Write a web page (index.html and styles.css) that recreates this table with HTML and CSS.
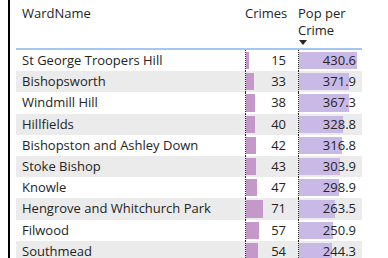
FILE: index.html
```html
<!DOCTYPE html>
<html>
<head>
<meta charset="utf-8">
<link rel="stylesheet" href="styles.css">
</head>
<body>
<div class="frame">
  <div class="table">
    <div class="head">
      <div class="hcell">WardName</div>
      <div class="hcell">Crimes</div>
      <div class="hcell">Pop per<br>Crime
        <svg class="sort" width="8" height="5" viewBox="0 0 8 5"><path d="M0 0 H8 L4 5 Z" fill="#252423"/></svg>
      </div>
    </div>
    <div class="row"><div class="name">St George Troopers Hill</div><div class="num"><div class="inner"><span class="bar crimes" style="width:3.4px"></span><span class="val">15</span></div></div><div class="num pop"><div class="inner"><span class="bar ppc" style="width:58px"></span><span class="val">430.6</span></div></div></div>
    <div class="row"><div class="name">Bishopsworth</div><div class="num"><div class="inner"><span class="bar crimes" style="width:7.5px"></span><span class="val">33</span></div></div><div class="num pop"><div class="inner"><span class="bar ppc" style="width:50.1px"></span><span class="val">371.9</span></div></div></div>
    <div class="row"><div class="name">Windmill Hill</div><div class="num"><div class="inner"><span class="bar crimes" style="width:8.7px"></span><span class="val">38</span></div></div><div class="num pop"><div class="inner"><span class="bar ppc" style="width:49.5px"></span><span class="val">367.3</span></div></div></div>
    <div class="row"><div class="name">Hillfields</div><div class="num"><div class="inner"><span class="bar crimes" style="width:9.1px"></span><span class="val">40</span></div></div><div class="num pop"><div class="inner"><span class="bar ppc" style="width:44.3px"></span><span class="val">328.8</span></div></div></div>
    <div class="row"><div class="name">Bishopston and Ashley Down</div><div class="num"><div class="inner"><span class="bar crimes" style="width:9.6px"></span><span class="val">42</span></div></div><div class="num pop"><div class="inner"><span class="bar ppc" style="width:42.7px"></span><span class="val">316.8</span></div></div></div>
    <div class="row"><div class="name">Stoke Bishop</div><div class="num"><div class="inner"><span class="bar crimes" style="width:9.8px"></span><span class="val">43</span></div></div><div class="num pop"><div class="inner"><span class="bar ppc" style="width:40.9px"></span><span class="val">303.9</span></div></div></div>
    <div class="row"><div class="name">Knowle</div><div class="num"><div class="inner"><span class="bar crimes" style="width:10.7px"></span><span class="val">47</span></div></div><div class="num pop"><div class="inner"><span class="bar ppc" style="width:40.3px"></span><span class="val">298.9</span></div></div></div>
    <div class="row"><div class="name">Hengrove and Whitchurch Park</div><div class="num"><div class="inner"><span class="bar crimes" style="width:16.5px"></span><span class="val">71</span></div></div><div class="num pop"><div class="inner"><span class="bar ppc" style="width:35.5px"></span><span class="val">263.5</span></div></div></div>
    <div class="row"><div class="name">Filwood</div><div class="num"><div class="inner"><span class="bar crimes" style="width:13px"></span><span class="val">57</span></div></div><div class="num pop"><div class="inner"><span class="bar ppc" style="width:33.8px"></span><span class="val">250.9</span></div></div></div>
    <div class="row"><div class="name">Southmead</div><div class="num"><div class="inner"><span class="bar crimes" style="width:12.3px"></span><span class="val">54</span></div></div><div class="num pop"><div class="inner"><span class="bar ppc" style="width:32.9px"></span><span class="val">244.3</span></div></div></div>
  </div>
</div>
</body>
</html>
```

FILE: styles.css
```css
html, body {
  margin: 0;
  padding: 0;
  background: #ffffff;
  overflow: hidden;
}
body {
  width: 388px;
  height: 258px;
  font-family: "Open Sans", "Noto Sans", sans-serif;
  font-size: 13px;
  color: #252423;
}
.frame {
  margin-left: 8px;
  height: 258px;
  border-left: 2px solid #000000;
  padding-left: 6px;
}
.table {
  width: 346px;
  display: flex;
  flex-direction: column;
}
.head, .row {
  display: grid;
  grid-template-columns: 223px 53px 70px;
}
.head {
  height: 48px;
  border-bottom: 2px solid #a3c7ee;
}
.hcell {
  padding: 5px 6px 0 6px;
  line-height: 17px;
  white-space: nowrap;
}
.sort {
  display: block;
  margin-top: 1px;
  margin-left: 1px;
}
.row {
  height: 21.2px;
  line-height: 21px;
}
.row:nth-child(odd) {
  background: #ebebeb;
}
.name {
  padding-left: 6px;
  white-space: nowrap;
}
.num {
  padding: 0 6px;
}
.inner {
  position: relative;
  height: 100%;
  border-left: 1px dotted #222222;
  text-align: right;
}
.bar {
  position: absolute;
  left: 0;
  top: 2px;
  bottom: 2px;
}
.bar.crimes {
  background: #c498c8;
}
.bar.ppc {
  background: #c9b9e7;
}
.val {
  position: relative;
}
```
